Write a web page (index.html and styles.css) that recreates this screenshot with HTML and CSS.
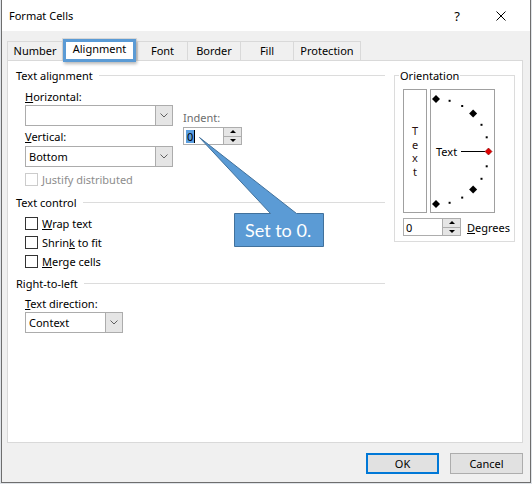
FILE: index.html
```html
<!DOCTYPE html>
<html>
<head>
<meta charset="utf-8">
<link rel="stylesheet" href="styles.css">
</head>
<body>
<div class="window">
  <div class="titlebar">
    <span class="title">Format Cells</span>
    <span class="help">?</span>
    <svg class="close" width="10" height="10" viewBox="0 0 10 10"><path d="M0.5 0.5 L9.5 9.5 M9.5 0.5 L0.5 9.5" stroke="#000" stroke-width="1" fill="none"/></svg>
  </div>
  <div class="tabs">
    <div class="tab w-number">Number</div>
    <div class="tab sel w-align">Alignment<span class="mark"></span></div>
    <div class="tab w-font">Font</div>
    <div class="tab w-border">Border</div>
    <div class="tab w-fill">Fill</div>
    <div class="tab w-prot last">Protection</div>
  </div>
  <div class="panel">
    <div class="left">
      <div class="group-head">Text alignment</div>
      <div class="align">
        <div class="align-main">
          <span class="lbl lbl-h"><u>H</u>orizontal:</span>
          <div class="combo combo-1"><span class="txt"></span><span class="drop"><svg width="8" height="5" viewBox="0 0 8 5"><polyline points="0.5,0.5 4,4 7.5,0.5" fill="none" stroke="#606060"/></svg></span></div>
          <span class="lbl lbl-v"><u>V</u>ertical:</span>
          <div class="combo combo-2"><span class="txt">Bottom</span><span class="drop"><svg width="8" height="5" viewBox="0 0 8 5"><polyline points="0.5,0.5 4,4 7.5,0.5" fill="none" stroke="#606060"/></svg></span></div>
          <div class="check disabled first"><span class="cb"></span>Justify distributed</div>
        </div>
        <div class="indent">
          <span class="lbl lbl-indent">Indent:</span>
          <div class="spin"><span class="val"><span class="selv">0</span><span class="caret"></span></span><span class="btns"><span class="up"><i class="tri-up"></i></span><span class="dn"><i class="tri-dn"></i></span></span></div>
        </div>
      </div>
      <div class="group-head gh-control">Text control</div>
      <div class="checks">
        <div class="check"><span class="cb"></span><span><u>W</u>rap text</span></div>
        <div class="check"><span class="cb"></span><span>Shrin<u>k</u> to fit</span></div>
        <div class="check"><span class="cb"></span><span><u>M</u>erge cells</span></div>
      </div>
      <div class="group-head gh-rtl">Right-to-left</div>
      <span class="lbl lbl-dir"><u>T</u>ext direction:</span>
      <div class="combo combo-3"><span class="txt">Context</span><span class="drop"><svg width="8" height="5" viewBox="0 0 8 5"><polyline points="0.5,0.5 4,4 7.5,0.5" fill="none" stroke="#606060"/></svg></span></div>
    </div>
    <fieldset class="orient">
      <legend>Orientation</legend>
      <div class="orient-row">
        <div class="vtext"><span>T</span><span>e</span><span>x</span><span>t</span></div>
        <div class="dial">
          <svg width="63" height="122" viewBox="0 0 63 122">
            <g fill="#000">
              <polygon points="5,5 9,9 5,13 1,9"/>
              <polygon points="42.1,19.4 46.1,23.4 42.1,27.4 38.1,23.4"/>
              <polygon points="42.1,95.6 46.1,99.6 42.1,103.6 38.1,99.6"/>
              <polygon points="5,110 9,114 5,118 1,114"/>
              <rect x="17.6" y="9.8" width="2" height="2"/>
              <rect x="30.2" y="15" width="2" height="2"/>
              <rect x="49.5" y="33.8" width="2" height="2"/>
              <rect x="54.7" y="46.3" width="2" height="2"/>
              <rect x="54.7" y="75.3" width="2" height="2"/>
              <rect x="49.5" y="87.8" width="2" height="2"/>
              <rect x="30.2" y="106.6" width="2" height="2"/>
              <rect x="17.6" y="111.8" width="2" height="2"/>
            </g>
            <line x1="30" y1="61.5" x2="54" y2="61.5" stroke="#000" stroke-width="1"/>
            <polygon points="57.5,58 61,61.5 57.5,65 54,61.5" fill="#e00000" stroke="#800000" stroke-width="0.6"/>
            <text x="5" y="65.5" class="dial-text">Text</text>
          </svg>
        </div>
      </div>
      <div class="deg-row">
        <div class="spin spin-deg"><span class="val val-deg">0</span><span class="btns"><span class="up"><i class="tri-up"></i></span><span class="dn"><i class="tri-dn"></i></span></span></div>
        <span class="deg-lbl"><u>D</u>egrees</span>
      </div>
    </fieldset>
  </div>
  <div class="buttons">
    <button class="btn ok">OK</button>
    <button class="btn">Cancel</button>
  </div>
</div>
<svg class="callout" width="532" height="484" viewBox="0 0 532 484">
  <path d="M199.5,137.5 L270.5,213.5 L234.5,213.5 L234.5,246.5 L323.5,246.5 L323.5,213.5 L296.5,213.5 Z" fill="#5b9bd5" stroke="#41719c" stroke-width="1"/>
  <text x="245" y="236.5" class="callout-text">Set to 0.</text>
</svg>
</body>
</html>
```
FILE: styles.css
```css
body {
  margin: 0;
  background: #dfe3e8;
  font-family: "Noto Sans", "DejaVu Sans", sans-serif;
  font-size: 11px;
  color: #000;
}

.window {
  position: relative;
  margin-left: 1px;
  width: 530px;
  height: 483px;
  box-sizing: border-box;
  border: 1px solid #6e6e6e;
  border-top: none;
  background: #f0f0f0;
}

.titlebar {
  height: 31px;
  background: #fff;
  display: flex;
  align-items: center;
  padding-left: 7px;
}

.title {
  font-size: 11px;
}

.help {
  margin-left: auto;
  font-size: 13px;
}

.close {
  margin-left: 36px;
  margin-right: 24px;
}

.tabs {
  display: flex;
  align-items: flex-end;
  height: 22px;
  margin: 7px 0 0 5px;
  position: relative;
  z-index: 1;
}

.tab {
  height: 19px;
  box-sizing: border-box;
  border-top: 1px solid #d9d9d9;
  border-left: 1px solid #d9d9d9;
  display: flex;
  align-items: center;
  justify-content: center;
  padding-bottom: 1px;
}

.tab.last {
  border-right: 1px solid #d9d9d9;
}

.tab.sel {
  position: relative;
  height: 23px;
  margin-bottom: -1px;
  background: #fff;
  border-right: 1px solid #d9d9d9;
  padding-bottom: 4px;
}

.mark {
  position: absolute;
  left: 0;
  top: 0;
  right: 0;
  bottom: -1px;
  box-sizing: border-box;
  border: 3px solid #5b9bd5;
  box-shadow: 1px 2px 3px rgba(0, 0, 0, 0.28);
}

.w-number { width: 55px; }
.w-align { width: 75px; }
.w-font { width: 50px; }
.w-border { width: 53px; }
.w-fill { width: 53px; }
.w-prot { width: 68px; }

.panel {
  margin-left: 5px;
  width: 516px;
  height: 383px;
  box-sizing: border-box;
  border: 1px solid #d9d9d9;
  background: #fff;
  display: flex;
  align-items: flex-start;
  gap: 9px;
  padding: 7px 0 0 8px;
}

.left {
  width: 369px;
  flex: none;
}

.group-head {
  display: flex;
  align-items: center;
  height: 15px;
  line-height: 15px;
}

.group-head::after {
  content: "";
  flex: 1;
  height: 1px;
  background: #dcdcdc;
  margin-left: 6px;
}

.gh-control { margin-top: 6px; }
.gh-rtl { margin-top: 5px; }

.align {
  display: flex;
  margin-left: 9px;
}

.align-main {
  width: 148px;
}

.lbl {
  display: block;
  height: 15px;
  line-height: 15px;
}

.lbl-h { margin-top: 6px; }
.lbl-v { margin-top: 3px; }
.lbl-dir { margin-top: 5px; margin-left: 9px; }

.combo {
  display: flex;
  height: 21px;
  box-sizing: border-box;
  border: 1px solid #acacac;
  background: #fff;
}

.combo-1 { margin-top: 1px; }
.combo-2 { margin-top: 2px; }
.combo-3 { margin-top: 1px; margin-left: 9px; width: 98px; }

.combo .txt {
  flex: 1;
  padding-left: 3px;
  line-height: 19px;
}

.combo .drop {
  width: 17px;
  box-sizing: border-box;
  background: #e5e5e5;
  border-left: 1px solid #acacac;
  display: flex;
  align-items: center;
  justify-content: center;
}

.check {
  display: flex;
  align-items: center;
  height: 19px;
}

.check.first {
  margin-top: 3px;
}

.checks {
  margin-top: 4px;
  margin-left: 9px;
}

.cb {
  width: 13px;
  height: 13px;
  box-sizing: border-box;
  border: 1px solid #333;
  background: #fff;
  margin-right: 4px;
  flex: none;
}

.check.disabled {
  color: #8d8d8d;
}

.check.disabled .cb {
  border-color: #cccccc;
}

.indent {
  margin-left: 10px;
}

.lbl-indent {
  margin-top: 27px;
  color: #6d6d6d;
}

.spin {
  display: flex;
  width: 59px;
  height: 18px;
  box-sizing: border-box;
  border: 1px solid #adadad;
  background: #fff;
  margin-top: 2px;
}

.spin .val {
  flex: 1;
  display: flex;
  align-items: center;
  padding-left: 2px;
}

.selv {
  background: #5a9ee0;
  color: #000;
  line-height: 13px;
  padding: 0 1px;
}

.caret {
  width: 1px;
  height: 13px;
  background: #000;
}

.spin .btns {
  width: 18px;
  box-sizing: border-box;
  display: flex;
  flex-direction: column;
  border-left: 1px solid #adadad;
}

.spin .up,
.spin .dn {
  flex: 1;
  background: #e5e5e5;
  display: flex;
  align-items: center;
  justify-content: center;
}

.spin .dn {
  border-top: 1px solid #adadad;
}

.tri-up {
  width: 0;
  height: 0;
  border-left: 3px solid transparent;
  border-right: 3px solid transparent;
  border-bottom: 3px solid #000;
}

.tri-dn {
  width: 0;
  height: 0;
  border-left: 3px solid transparent;
  border-right: 3px solid transparent;
  border-top: 3px solid #000;
}

.orient {
  margin: 0;
  width: 121px;
  box-sizing: border-box;
  border: 1px solid #dcdcdc;
  padding: 6px 0 5px 4px;
  flex: none;
}

.orient legend {
  padding: 0 1px;
  line-height: 15px;
  height: 15px;
}

.orient-row {
  display: flex;
  gap: 3px;
  margin-left: 4px;
}

.vtext {
  width: 24px;
  height: 124px;
  box-sizing: border-box;
  border: 1px solid #a0a0a0;
  display: flex;
  flex-direction: column;
  align-items: center;
  justify-content: center;
  line-height: 13.5px;
  color: #2a1010;
}

.dial {
  width: 65px;
  height: 124px;
  box-sizing: border-box;
  border: 1px solid #a0a0a0;
}

.dial svg {
  display: block;
}

.dial-text {
  font-family: "Noto Sans", "DejaVu Sans", sans-serif;
  font-size: 11px;
  fill: #000;
}

.deg-row {
  display: flex;
  align-items: center;
  margin-top: 5px;
  margin-left: 4px;
}

.spin-deg {
  width: 58px;
  margin-top: 0;
}

.val-deg {
  padding-left: 4px;
}

.deg-lbl {
  margin-left: 6px;
}

.buttons {
  display: flex;
  justify-content: flex-end;
  gap: 11px;
  width: 516px;
  margin: 10px 0 0 5px;
}

.btn {
  width: 73px;
  height: 21px;
  box-sizing: border-box;
  border: 1px solid #adadad;
  background: #e1e1e1;
  font-family: "Noto Sans", "DejaVu Sans", sans-serif;
  font-size: 11px;
  color: #000;
  padding: 0;
}

.btn.ok {
  border: 2px solid #0078d7;
}

.callout {
  position: absolute;
  left: 0;
  top: 0;
  pointer-events: none;
}

.callout-text {
  font-family: Lato, "Liberation Sans", sans-serif;
  font-size: 18px;
  fill: #fff;
}
```
